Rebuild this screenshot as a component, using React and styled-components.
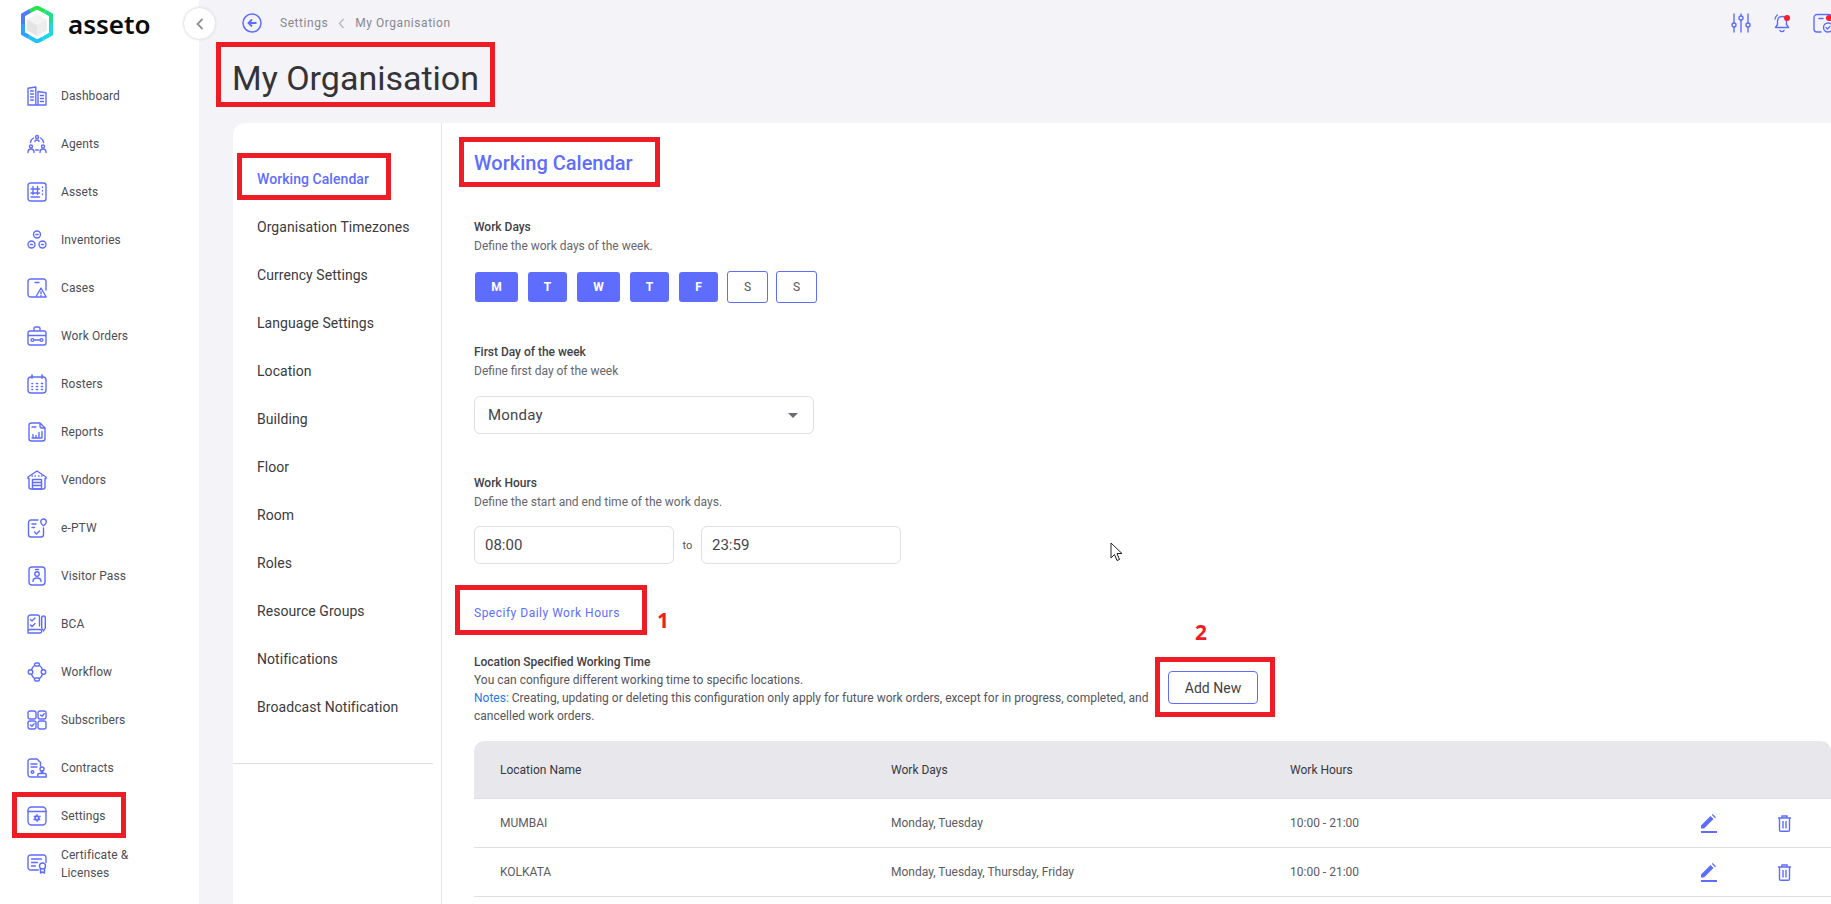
import React from 'react';
import styled, { createGlobalStyle } from 'styled-components';

const Global = createGlobalStyle`
  html, body { margin: 0; padding: 0; height: 100%; overflow: hidden; background: #f3f3f8; }
  * { box-sizing: border-box; }
  body { font-family: Roboto, "Liberation Sans", sans-serif; }
`;

const accent = '#5f6dff';

const Page = styled.div`
  position: relative;
  display: grid;
  grid-template-columns: 199px 1fr;
  width: 1831px;
  height: 904px;
  overflow: hidden;
  background: #f3f3f8;
`;
const Sidebar = styled.aside`
  background: #fff;
  display: flex;
  flex-direction: column;
`;
const LogoRow = styled.div`
  height: 72px;
  display: flex;
  align-items: flex-start;
  gap: 14px;
  padding: 6px 0 0 20px;
`;
const LogoText = styled.span`
  font-family: "Noto Sans", sans-serif;
  font-weight: 600;
  font-size: 26px;
  line-height: 36px;
  color: #0b0b0b;
`;
const Collapse = styled.button`
  position: absolute;
  left: 183px;
  top: 7px;
  width: 33px;
  height: 33px;
  border-radius: 50%;
  border: 1px solid #e6e6ea;
  background: #fff;
  box-shadow: 0 0 3px rgba(0,0,0,.08);
  display: flex;
  align-items: center;
  justify-content: center;
  padding: 0;
`;
const NavItem = styled.div`
  height: 48px;
  display: flex;
  align-items: center;
  gap: 14px;
  padding-left: 27px;
  font-size: 12px;
  line-height: 18px;
  letter-spacing: .1px;
  color: #4d4d55;
`;
const Glyph = styled.svg`
  width: 20px;
  height: 20px;
  flex: none;
  fill: none;
  stroke: ${accent};
  stroke-width: 1.4;
  stroke-linecap: round;
  stroke-linejoin: round;
`;
const Main = styled.main`
  display: flex;
  flex-direction: column;
  min-width: 0;
`;
const TopBar = styled.header`
  height: 46px;
  display: flex;
  align-items: center;
  padding-left: 43px;
`;
const Crumb = styled.span`
  font-size: 12px;
  letter-spacing: .55px;
  color: #88888f;
`;
const CrumbRow = styled.nav`
  display: flex;
  align-items: center;
  margin-left: 18px;
  gap: 10px;
`;
const TopIcons = styled.div`
  margin-left: auto;
  display: flex;
  gap: 21px;
  margin-right: -2px;
  align-items: center;
`;
const Title = styled.h1`
  margin: 0;
  height: 77px;
  padding: 13px 0 0 33px;
  font-weight: 400;
  font-size: 34px;
  line-height: 38px;
  color: #333338;
`;
const Card = styled.section`
  margin-left: 34px;
  flex: 1;
  min-height: 0;
  background: #fff;
  border-top-left-radius: 12px;
  display: grid;
  grid-template-columns: 209px 1fr;
`;
const SideCol = styled.div`
  border-right: 1px solid #e4e4e9;
  padding: 32px 8px 0 0;
`;
const SideLink = styled.div`
  height: 48px;
  display: flex;
  align-items: center;
  padding-left: 24px;
  font-size: 14px;
  font-weight: ${p => (p.$active ? 500 : 400)};
  letter-spacing: .06px;
  color: ${p => (p.$active ? accent : '#3a3a40')};
`;
const SideRule = styled.hr`
  margin: 32px 0 0;
  border: 0;
  border-top: 1px solid #dfdfe3;
`;
const Content = styled.div`
  padding-left: 32px;
  min-width: 0;
`;
const Heading = styled.h2`
  margin: 0;
  height: 95px;
  padding-top: 26px;
  font-size: 20px;
  line-height: 28px;
  font-weight: 500;
  color: ${accent};
`;
const Label = styled.div`
  font-size: 12px;
  line-height: 18px;
  font-weight: 500;
  letter-spacing: -.02px;
  color: #414147;
`;
const Hint = styled.div`
  margin-top: 1px;
  font-size: 12px;
  line-height: 18px;
  color: #66666d;
`;
const Group = styled.div`
  margin-bottom: 40px;
`;
const Days = styled.div`
  display: flex;
  align-items: center;
  margin-top: 16px;
  height: 32px;
  padding-left: 1px;
`;
const Day = styled.div`
  width: ${p => p.$w}px;
  height: ${p => (p.$on ? 30 : 32)}px;
  margin-right: ${p => p.$gap}px;
  border-radius: 3px;
  display: flex;
  align-items: center;
  justify-content: center;
  font-size: 12px;
  font-weight: ${p => (p.$on ? 700 : 400)};
  background: ${p => (p.$on ? accent : '#fff')};
  color: ${p => (p.$on ? '#fff' : '#55555c')};
  border: ${p => (p.$on ? '0' : `1px solid ${accent}`)};
`;
const Field = styled.div`
  width: ${p => p.$w}px;
  height: 38px;
  border: 1px solid #dfdfe4;
  border-radius: 6px;
  display: flex;
  align-items: center;
  justify-content: space-between;
  padding: 0 15px 0 ${p => p.$pl}px;
  font-size: 15px;
  letter-spacing: ${p => p.$track}px;
  color: #44444b;
`;
const Caret = styled.span`
  width: 0;
  height: 0;
  border-left: 5px solid transparent;
  border-right: 5px solid transparent;
  border-top: 5px solid #6b6b72;
`;
const FieldRow = styled.div`
  display: flex;
  align-items: center;
  margin-top: ${p => p.$top}px;
`;
const To = styled.span`
  width: 27px;
  text-align: center;
  font-size: 11px;
  color: #55555c;
`;
const LinkText = styled.div`
  font-size: 12px;
  line-height: 19px;
  letter-spacing: .5px;
  color: ${accent};
  margin-bottom: 30px;
`;
const InfoRow = styled.div`
  display: flex;
  gap: 14px;
  margin-bottom: 16px;
`;
const Info = styled.div`
  width: 680px;
`;
const Para = styled.p`
  margin: 0;
  font-size: 12px;
  line-height: 18px;
  color: #55555c;
`;
const Note = styled.span`
  color: #1f77e6;
`;
const AddButton = styled.button`
  width: 90px;
  height: 33px;
  margin-top: 18px;
  border: 1px solid ${accent};
  border-radius: 4px;
  background: #fff;
  font-family: inherit;
  font-size: 14px;
  color: #3f3f46;
  padding: 0;
`;
const Row = styled.div`
  display: grid;
  grid-template-columns: 391px 399px 1fr auto;
  align-items: center;
  padding-left: 26px;
  height: ${p => p.$h}px;
  border-bottom: 1px solid #e0e0e4;
  font-size: 12px;
  color: ${p => (p.$head ? '#38383e' : '#5b5b62')};
  background: ${p => (p.$head ? '#e7e7ec' : '#fff')};
  border-radius: ${p => (p.$head ? '10px 10px 0 0' : '0')};
`;
const Actions = styled.div`
  display: flex;
  align-items: center;
  gap: 60px;
  padding-right: 39px;
`;
const Annotation = styled.div`
  position: absolute;
  left: ${p => p.$x}px;
  top: ${p => p.$y}px;
  width: ${p => p.$w}px;
  height: ${p => p.$h}px;
  border: 5px solid #ee1c25;
  pointer-events: none;
`;
const Digit = styled.span`
  position: absolute;
  left: ${p => p.$x}px;
  top: ${p => p.$y}px;
  font-family: "Noto Sans", sans-serif;
  font-weight: 700;
  font-size: 21px;
  line-height: 26px;
  color: #ee1c25;
`;
const Pointer = styled.svg`
  position: absolute;
  left: 1110px;
  top: 542px;
  width: 14px;
  height: 21px;
`;
const Badge = styled.span`
  position: absolute;
  right: ${p => p.$r}px;
  top: 2px;
  width: 6px;
  height: 6px;
  border-radius: 50%;
  background: #ff1a2e;
`;
const IconSlot = styled.span`
  position: relative;
  width: 20px;
  height: 20px;
  display: block;
`;
const Small = styled.svg`
  display: block;
  width: ${p => p.$w}px;
  height: ${p => p.$h}px;
`;

const paths = {
  dashboard: <><path d="M1 19V2.200L8.800 1v18zM11 19V5.500l8 1.200V19zM1 19h18"/><path d="M3.500 5h3M3.500 8h3M3.500 11h3M3.500 14h3M13.500 9.500h3M13.500 12.500h3M13.500 15.500h3"/></>,
  agents: <><circle cx="10" cy="3" r="1.500"/><path d="M3.500 8.500c.3-2 1.200-3.500 3-4.500M16.500 8.500c-.3-2-1.200-3.500-3-4.500M8 7.500c0-1 .8-1.500 2-1.500s2 .5 2 1.500"/><circle cx="4" cy="12.500" r="1.500"/><circle cx="16" cy="12.500" r="1.500"/><path d="M1 18.500c0-2.200 1.200-3.500 3-3.500s3 1.300 3 3.500M13 18.500c0-2.200 1.200-3.500 3-3.500s3 1.300 3 3.500M8.500 16h3"/></>,
  assets: <><rect x="1" y="1" width="18" height="18" rx="2.500"/><path d="M4 7h8.500M4 11h8.500M4 15h8.500M6 4.500v8M10.500 4.500v8M15.500 5v.5M15.500 8.500v.5M15.500 12v.5"/></>,
  inventories: <><circle cx="10" cy="4.500" r="3.500"/><circle cx="4.500" cy="14.500" r="3.500"/><circle cx="15.500" cy="14.500" r="3.500"/><path d="M8.800 4.500h2.400M3.500 14.500h2M14.500 14.500h2"/></>,
  cases: <><path d="M8 19H3.500A2.500 2.500 0 0 1 1 16.500v-13A2.500 2.500 0 0 1 3.500 1h13A2.500 2.500 0 0 1 19 3.500V12"/><path d="M8 4.500h4"/><path d="M14 10L8.800 19h10.400zM14 13.800v2M14 17.500v.2"/></>,
  workorders: <><path d="M3 5h14a2 2 0 0 1 2 2v10a2 2 0 0 1-2 2H3a2 2 0 0 1-2-2V7a2 2 0 0 1 2-2zM7 5V2.500A1.500 1.500 0 0 1 8.500 1h3A1.500 1.500 0 0 1 13 2.500V5M1 9.500h18"/><path d="M7 14h6"/><circle cx="5.500" cy="14" r="1.400"/><circle cx="14.500" cy="14" r="1.400"/></>,
  rosters: <><rect x="1" y="3" width="18" height="16" rx="3"/><path d="M5 1v3M15 1v3M5 9.500h.5M9.500 9.500h1M14.500 9.500h1M5 12.500h.5M9.500 12.500h1M14.500 12.500h1M5 15.500h.5M9.500 15.500h1M14.500 15.500h1" strokeWidth="1.700"/></>,
  reports: <><path d="M13 1H4.500A2.500 2.500 0 0 0 2 3.500v13A2.500 2.500 0 0 0 4.500 19h11a2.500 2.500 0 0 0 2.500-2.500V6h-3a2 2 0 0 1-2-2zM13 1l5 5"/><path d="M5 5h4M5 16h10M6 15.500v-3M9 15.500v-2M12 15.500v-5M15 15.500V9.500"/></>,
  vendors: <><path d="M1 7L10 1l9 6v1.500h-1V17a2 2 0 0 1-2 2H4a2 2 0 0 1-2-2V8.500H1z"/><rect x="5.500" y="9.500" width="9" height="9.500"/><path d="M5.500 12.500h9M5.500 15.500h9M5 6h.5M8 6h.5M11.500 6h.5M14.500 6h.5"/></>,
  eptw: <><path d="M11 2H4a2.500 2.500 0 0 0-2.500 2.500v12A2.500 2.500 0 0 0 4 19h10a2.500 2.500 0 0 0 2.500-2.500V10"/><path d="M16.500 1a2.800 2.800 0 0 1 2.800 2.800c0 2-2.800 4-2.800 4s-2.800-2-2.800-4A2.800 2.800 0 0 1 16.500 1z"/><path d="M5 6h4M5 9.500h2.500M7.500 14l2 2 3-3"/></>,
  visitor: <><rect x="2" y="1" width="16" height="18" rx="3"/><circle cx="10" cy="8" r="2.200"/><path d="M6 15.500c0-2.500 1.800-3.500 4-3.500s4 1 4 3.500M8.500 3.500h3"/></>,
  bca: <><path d="M12.500 12V3a2 2 0 0 0-2-2H3.500A2.500 2.500 0 0 0 1 3.500V19h12a1.700 1.700 0 0 0 0-3.500H3.500A2.500 2.500 0 0 0 1 17"/><path d="M3.500 5.500l1.500 1.500 3-3M3.500 11l1.500 1.500 3-3"/><path d="M16.500 2c1 0 1.800.8 1.800 2v10l-1.800 3-1.800-3V4c0-1.200.8-2 1.800-2z"/></>,
  workflow: <><rect x="7.500" y="1" width="5" height="3" rx="1.500"/><rect x="7.500" y="16" width="5" height="3" rx="1.500"/><circle cx="3.500" cy="10" r="2.300"/><circle cx="16.500" cy="10" r="2.300"/><path d="M7.500 3.500A8 8 0 0 0 4.500 7.800M12.500 3.500A8 8 0 0 1 15.500 7.800M4.500 12.200A8 8 0 0 0 7.500 16.500M15.500 12.200A8 8 0 0 1 12.500 16.500"/></>,
  subscribers: <><rect x="1" y="1" width="8" height="8" rx="2"/><rect x="11" y="1" width="8" height="8" rx="2"/><rect x="1" y="11" width="8" height="8" rx="2"/><rect x="11" y="11" width="8" height="8" rx="2"/><path d="M13.500 5l1.500 1.300 2.200-2.500M3.500 15l1.500 1.300 2.200-2.500"/></>,
  contracts: <><path d="M9.500 19H3.500A2.500 2.500 0 0 1 1 16.500v-13A2.500 2.500 0 0 1 3.500 1H10l3.500 3.500V8"/><path d="M4 6h6M4 9h6"/><circle cx="5.500" cy="14" r="1.300"/><circle cx="15" cy="11" r="2"/><path d="M14.300 13v2.500H12a1.200 1.200 0 0 0-1.200 1.200V19h8.400v-2.300A1.200 1.200 0 0 0 18 15.500h-2.300V13"/></>,
  settings: <><rect x="1" y="1" width="18" height="18" rx="3.500"/><path d="M1 5.500h18"/><path d="M10 8.300L13.200 14H6.800zM10 15.700L6.800 10h6.400z" fill={accent} strokeWidth=".6"/><circle cx="10" cy="12" r="1" fill="#fff" stroke="none"/></>,
  certificate: <><path d="M11.500 16H3.500A2.500 2.500 0 0 1 1 13.500v-10A2.500 2.500 0 0 1 3.500 1h13A2.500 2.500 0 0 1 19 3.500v5"/><path d="M4.500 5h10M4.500 8.500h6M4.500 12h4"/><circle cx="15.500" cy="12" r="3"/><path d="M13.500 14.500V19l2-1 2 1v-4.500"/></>,
};

const NavIcon = ({ name }) => <Glyph viewBox="0 0 20 20">{paths[name]}</Glyph>;

const Logo = () => (
  <Small $w={34} $h={37} viewBox="0 0 34 37">
    <path d="M9 5.500L17 1.500l8 4" fill="none" stroke="#27e34f" strokeWidth="4"/>
    <path d="M25 5.500l6 3.500v8" fill="none" stroke="#1fe08a" strokeWidth="4"/>
    <path d="M31 17v11l-8 4.500" fill="none" stroke="#1fd8df" strokeWidth="4"/>
    <path d="M23 32.500L17 35.500l-8-4.500" fill="none" stroke="#1ec4f5" strokeWidth="4"/>
    <path d="M9 31l-6-3.500V18" fill="none" stroke="#2ba5fb" strokeWidth="4"/>
    <path d="M3 18V9l7-4" fill="none" stroke="#4b7dfd" strokeWidth="4"/>
    <path d="M17 8l10 5.500-10 5.500-10-5.500z" fill="#f3f3f3"/>
    <path d="M7 13.500l10 5.500v11L7 24.500z" fill="#e4e4e4"/>
    <path d="M27 13.500L17 19v11l10-5.500z" fill="#ededed"/>
  </Small>
);

const sideNav = [
  ['dashboard', 'Dashboard'], ['agents', 'Agents'], ['assets', 'Assets'], ['inventories', 'Inventories'],
  ['cases', 'Cases'], ['workorders', 'Work Orders'], ['rosters', 'Rosters'], ['reports', 'Reports'],
  ['vendors', 'Vendors'], ['eptw', 'e-PTW'], ['visitor', 'Visitor Pass'], ['bca', 'BCA'],
  ['workflow', 'Workflow'], ['subscribers', 'Subscribers'], ['contracts', 'Contracts'], ['settings', 'Settings'],
];

const sections = ['Working Calendar', 'Organisation Timezones', 'Currency Settings', 'Language Settings', 'Location', 'Building', 'Floor', 'Room', 'Roles', 'Resource Groups', 'Notifications', 'Broadcast Notification'];

const days = [
  ['M', 43, 10, true], ['T', 39, 10, true], ['W', 43, 10, true], ['T', 39, 10, true], ['F', 39, 9, true],
  ['S', 41, 8, false], ['S', 41, 0, false],
];

const rows = [
  ['MUMBAI', 'Monday, Tuesday', '10:00 - 21:00'],
  ['KOLKATA', 'Monday, Tuesday, Thursday, Friday', '10:00 - 21:00'],
];

const EditIcon = () => (
  <Small $w={16} $h={19} viewBox="0 0 16 19">
    <path d="M0 11.500L9.500 2l3 3L3 14.500H0zM10.700 .8l1-.8 3.300 3.300-1 1z" fill={accent}/>
    <rect x="0" y="17" width="16" height="2" fill={accent}/>
  </Small>
);
const TrashIcon = () => (
  <Small $w={15} $h={17} viewBox="0 0 15 17">
    <path d="M1 3h13M5 3V1h5v2M2.500 3v12a1.200 1.200 0 0 0 1.200 1.200h7.600a1.200 1.200 0 0 0 1.200-1.200V3M6 6v7.500M9 6v7.500" fill="none" stroke={accent} strokeWidth="1.400"/>
  </Small>
);

export default function App() {
  return (
    <Page>
      <Global />
      <Sidebar>
        <LogoRow><Logo /><LogoText>asseto</LogoText></LogoRow>
        {sideNav.map(([icon, label]) => (
          <NavItem key={label}><NavIcon name={icon} />{label}</NavItem>
        ))}
        <NavItem><NavIcon name="certificate" /><span>Certificate &amp;<br />Licenses</span></NavItem>
      </Sidebar>
      <Collapse aria-label="Collapse">
        <Small $w={8} $h={12} viewBox="0 0 8 12"><path d="M6.500 1L1.500 6l5 5" fill="none" stroke="#8f8f96" strokeWidth="1.800"/></Small>
      </Collapse>
      <Main>
        <TopBar>
          <Small $w={20} $h={20} viewBox="0 0 20 20">
            <circle cx="10" cy="10" r="9" fill="none" stroke={accent} strokeWidth="1.500"/>
            <path d="M14.500 10H7M10 6.500L6.500 10l3.500 3.500" fill="none" stroke={accent} strokeWidth="1.800"/>
          </Small>
          <CrumbRow>
            <Crumb>Settings</Crumb>
            <Small $w={7} $h={11} viewBox="0 0 7 11"><path d="M5.500 1L1.500 5.500l4 4.500" fill="none" stroke="#b5b5bb" strokeWidth="1.300"/></Small>
            <Crumb>My Organisation</Crumb>
          </CrumbRow>
          <TopIcons>
            <IconSlot>
              <Glyph viewBox="0 0 20 20"><path d="M3 1v9M3 14v5M10 1v2M10 7v12M17 1v9M17 14v5"/><circle cx="3" cy="12" r="2"/><circle cx="10" cy="5" r="2"/><circle cx="17" cy="12" r="2"/></Glyph>
            </IconSlot>
            <IconSlot>
              <Glyph viewBox="0 0 20 20"><path d="M10 3.500c-3 0-4.500 2-4.500 5v3L3.500 14.500h13l-2-3v-3c0-3-1.500-5-4.500-5zM8 17.500c.5 1.500 3.500 1.500 4 0M3 6c.3-1.800 1-3 2.300-4"/></Glyph>
              <Badge $r={2} />
            </IconSlot>
            <IconSlot>
              <Glyph viewBox="0 0 20 20"><path d="M8 19H4a3 3 0 0 1-3-3V4.500a3 3 0 0 1 3-3h12a3 3 0 0 1 3 3V9M6 5.500h4"/><circle cx="15" cy="14.500" r="4.500"/><path d="M13 14.500l1.500 1.500 2.500-2.500"/></Glyph>
              <Badge $r={1} />
            </IconSlot>
          </TopIcons>
        </TopBar>
        <Title>My Organisation</Title>
        <Card>
          <SideCol>
            {sections.map((s, i) => <SideLink key={s} $active={i === 0}>{s}</SideLink>)}
            <SideRule />
          </SideCol>
          <Content>
            <Heading>Working Calendar</Heading>
            <Group>
              <Label>Work Days</Label>
              <Hint>Define the work days of the week.</Hint>
              <Days>
                {days.map(([d, w, gap, on], i) => <Day key={i} $w={w} $gap={gap} $on={on}>{d}</Day>)}
              </Days>
            </Group>
            <Group>
              <Label>First Day of the week</Label>
              <Hint>Define first day of the week</Hint>
              <FieldRow $top={16}>
                <Field $w={340} $pl={13} $track={.2}>Monday<Caret /></Field>
              </FieldRow>
            </Group>
            <Group>
              <Label>Work Hours</Label>
              <Hint>Define the start and end time of the work days.</Hint>
              <FieldRow $top={15}>
                <Field $w={200} $pl={10} $track={0}>08:00</Field>
                <To>to</To>
                <Field $w={200} $pl={10} $track={0}>23:59</Field>
              </FieldRow>
            </Group>
            <LinkText>Specify Daily Work Hours</LinkText>
            <InfoRow>
              <Info>
                <Label>Location Specified Working Time</Label>
                <Para>You can configure different working time to specific locations.</Para>
                <Para><Note>Notes:</Note> Creating, updating or deleting this configuration only apply for future work orders, except for in progress, completed, and cancelled work orders.</Para>
              </Info>
              <AddButton>Add New</AddButton>
            </InfoRow>
            <Row $head $h={58}>
              <span>Location Name</span><span>Work Days</span><span>Work Hours</span>
            </Row>
            {rows.map(r => (
              <Row key={r[0]} $h={49}>
                <span>{r[0]}</span><span>{r[1]}</span><span>{r[2]}</span>
                <Actions><EditIcon /><TrashIcon /></Actions>
              </Row>
            ))}
          </Content>
        </Card>
      </Main>
      <Annotation $x={216} $y={42} $w={279} $h={65} />
      <Annotation $x={237} $y={153} $w={154} $h={47} />
      <Annotation $x={459} $y={137} $w={201} $h={50} />
      <Annotation $x={455} $y={585} $w={192} $h={50} />
      <Annotation $x={1155} $y={657} $w={120} $h={60} />
      <Annotation $x={12} $y={792} $w={114} $h={46} />
      <Digit $x={657} $y={607}>1</Digit>
      <Digit $x={1195} $y={619}>2</Digit>
      <Pointer viewBox="0 0 14 21"><path d="M1 1v15l3.500-3.500 2.500 6 2.500-1-2.500-6H12z" fill="#fff" stroke="#222" strokeWidth="1"/></Pointer>
    </Page>
  );
}
